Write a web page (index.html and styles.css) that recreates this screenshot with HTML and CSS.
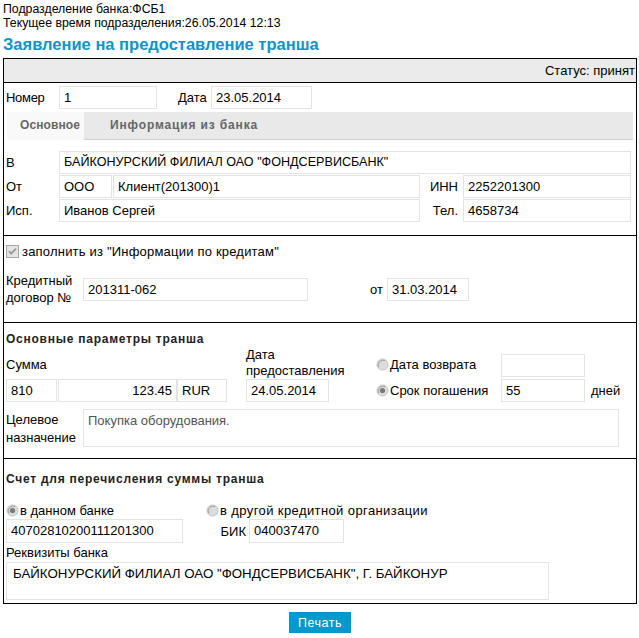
FILE: index.html
```html
<!DOCTYPE html>
<html lang="ru">
<head>
<meta charset="utf-8">
<title>Заявление на предоставление транша</title>
<link rel="stylesheet" href="styles.css">
</head>
<body>
<div class="info">Подразделение банка:ФСБ1</div>
<div class="info">Текущее время подразделения:26.05.2014 12:13</div>
<h1 class="title">Заявление на предоставление транша</h1>

<div class="frame">
  <div class="status">Статус: принят</div>

  <div class="num-row">
    <span class="lbl w-nomer">Номер</span>
    <span class="inp w-num">1</span>
    <span class="lbl w-data">Дата</span>
    <span class="inp w-date">23.05.2014</span>
  </div>

  <div class="tabs">
    <span class="tab active">Основное</span>
    <span class="tab">Информация из банка</span>
  </div>

  <div class="section s-parties">
    <div class="prow">
      <span class="lbl w-plbl">В</span>
      <span class="inp caps-s w-bank">БАЙКОНУРСКИЙ ФИЛИАЛ ОАО "ФОНДСЕРВИСБАНК"</span>
    </div>
    <div class="prow">
      <span class="lbl w-plbl">От</span>
      <span class="inp w-opf">ООО</span>
      <span class="inp w-client">Клиент(201300)1</span>
      <span class="lbl w-rlbl">ИНН</span>
      <span class="inp w-inn">2252201300</span>
    </div>
    <div class="prow">
      <span class="lbl w-plbl">Исп.</span>
      <span class="inp w-isp">Иванов Сергей</span>
      <span class="lbl w-rlbl">Тел.</span>
      <span class="inp w-inn">4658734</span>
    </div>
  </div>

  <div class="section s-credit">
    <div class="check-row">
      <svg class="chk" width="13" height="13" viewBox="0 0 13 13"><rect x="0.5" y="0.5" width="12" height="12" fill="#e4e4e4" stroke="#a8a8a8"/><path d="M3 6.2 L5.2 8.6 L10 3.6" fill="none" stroke="#9a9a9a" stroke-width="1.8"/></svg>
      <span class="chk-text">заполнить из "Информации по кредитам"</span>
    </div>
    <div class="credit-row">
      <span class="lbl w-klbl">Кредитный<br>договор №</span>
      <span class="inp w-dog">201311-062</span>
      <span class="lbl w-ot">от</span>
      <span class="inp w-otd">31.03.2014</span>
    </div>
  </div>

  <div class="section s-params">
    <div class="heading">Основные параметры транша</div>
    <div class="pgrid">
      <span class="lbl g-summa">Сумма</span>
      <span class="lbl g-dlbl">Дата<br>предоставления</span>
      <span class="radio g-r1"><svg width="13" height="13" viewBox="0 0 13 13"><circle cx="6.5" cy="6.5" r="5.5" fill="#dcdcdc" stroke="#c4c4c4"/><path d="M2.6 9.2 A5 5 0 0 1 9.2 2.6" fill="none" stroke="#a0a0a0" stroke-width="1"/></svg>Дата возврата</span>
      <span class="inp g-i1"></span>
      <span class="inp g-cur">810</span>
      <span class="inp g-amt">123.45</span>
      <span class="inp g-ccy">RUR</span>
      <span class="inp g-dp">24.05.2014</span>
      <span class="radio g-r2"><svg width="13" height="13" viewBox="0 0 13 13"><circle cx="6.5" cy="6.5" r="5.5" fill="#dcdcdc" stroke="#c4c4c4"/><path d="M2.6 9.2 A5 5 0 0 1 9.2 2.6" fill="none" stroke="#a0a0a0" stroke-width="1"/><circle cx="6.5" cy="6.5" r="2.6" fill="#7a7a7a"/></svg>Срок погашения</span>
      <span class="inp g-i2">55</span>
      <span class="lbl g-days">дней</span>
    </div>
    <div class="purpose-row">
      <span class="lbl w-klbl">Целевое<br>назначение</span>
      <span class="inp area w-purpose">Покупка оборудования.</span>
    </div>
  </div>

  <div class="section s-account">
    <div class="heading">Счет для перечисления суммы транша</div>
    <div class="acc-radios">
      <span class="radio w-r-this"><svg width="13" height="13" viewBox="0 0 13 13"><circle cx="6.5" cy="6.5" r="5.5" fill="#dcdcdc" stroke="#c4c4c4"/><path d="M2.6 9.2 A5 5 0 0 1 9.2 2.6" fill="none" stroke="#a0a0a0" stroke-width="1"/><circle cx="6.5" cy="6.5" r="2.6" fill="#7a7a7a"/></svg>в данном банке</span>
      <span class="radio wide"><svg width="13" height="13" viewBox="0 0 13 13"><circle cx="6.5" cy="6.5" r="5.5" fill="#dcdcdc" stroke="#c4c4c4"/><path d="M2.6 9.2 A5 5 0 0 1 9.2 2.6" fill="none" stroke="#a0a0a0" stroke-width="1"/></svg>в другой кредитной организации</span>
    </div>
    <div class="acc-row">
      <span class="inp w-acc">40702810200111201300</span>
      <span class="lbl w-bik">БИК</span>
      <span class="inp w-bikv">040037470</span>
    </div>
    <div class="lbl rekv">Реквизиты банка</div>
    <span class="inp area caps w-rekv">БАЙКОНУРСКИЙ ФИЛИАЛ ОАО "ФОНДСЕРВИСБАНК", Г. БАЙКОНУР</span>
  </div>
</div>

<div class="actions"><button class="btn" type="button">Печать</button></div>
</body>
</html>
```

FILE: styles.css
```css
* { box-sizing: border-box; }

body {
  margin: 0;
  padding: 2px 0 0 3px;
  font-family: "Liberation Sans", Arial, sans-serif;
  font-size: 12px;
  color: #000;
  background: #fff;
}

.info {
  line-height: 14px;
  font-size: 12.3px;
}

.title {
  margin: 6px 0 5px;
  font-size: 16.5px;
  line-height: 17px;
  font-weight: bold;
  color: #0a96cb;
}

.frame {
  width: 634px;
  border: 1px solid #000;
  font-size: 13px;
}

.status {
  height: 24px;
  line-height: 23px;
  background: #ebebeb;
  border-bottom: 1px solid #000;
  text-align: right;
  padding-right: 1px;
}

.lbl {
  display: block;
  line-height: 15px;
}

.inp {
  display: block;
  height: 23px;
  line-height: 21px;
  border: 1px solid #e3e3e3;
  background: #fff;
  padding: 0 4px;
  white-space: nowrap;
  overflow: hidden;
}

.caps { font-size: 13.3px; }
.caps-s { font-size: 12.6px; }
.wide { letter-spacing: 0.4px; }
.chk-text { letter-spacing: 0.2px; }

.area {
  line-height: 15px;
  padding-top: 3px;
  white-space: normal;
}

/* number row */
.num-row {
  display: flex;
  align-items: center;
  padding: 3px 0 0 2px;
}
.w-nomer { width: 53px; letter-spacing: -0.3px; }
.w-num { width: 98px; }
.w-data { width: 33px; margin-left: 21px; }
.w-date { width: 101px; }

/* tabs */
.tabs {
  display: flex;
  margin: 3px 3px 0 3px;
  height: 28px;
  background: #e9e9e9;
  font-size: 12px;
}
.tab {
  display: block;
  line-height: 26px;
  font-weight: bold;
  color: #666;
  border-bottom: 1px solid #cfcfcf;
  flex: 0 0 auto;
}
.tab.active {
  background: #f9f9f9;
  border-bottom: 0;
  width: 77px;
  padding-left: 13px;
  letter-spacing: 0.1px;
}
.tab:last-child {
  flex: 1 1 auto;
  padding-left: 26px;
  letter-spacing: 0.85px;
}

/* sections */
.section {
  border-bottom: 1px solid #000;
  padding-left: 2px;
}
.section:last-child { border-bottom: 0; }

.s-parties { padding-top: 10px; padding-bottom: 13px; }
.prow {
  display: flex;
  align-items: center;
  height: 24px;
}
.w-plbl { width: 53px; }
.w-bank { width: 572px; }
.w-opf { width: 53px; }
.w-client { width: 307px; margin-left: 1px; }
.w-rlbl { width: 43px; text-align: right; padding-right: 5px; }
.w-inn { width: 168px; }
.w-isp { width: 361px; }

.s-credit { padding-top: 8px; padding-bottom: 16px; }
.check-row {
  display: flex;
  align-items: center;
  gap: 3px;
  height: 14px;
}
.chk { display: block; }
.credit-row {
  display: flex;
  align-items: center;
  margin-top: 14px;
}
.w-klbl { width: 77px; line-height: 17px; }
.w-dog { width: 225px; }
.w-ot { width: 79px; text-align: right; padding-right: 4px; }
.w-otd { width: 82px; }

.heading {
  font-weight: bold;
  font-size: 12px;
  color: #222;
  letter-spacing: 0.75px;
  line-height: 16px;
}

.s-params { padding-top: 8px; padding-bottom: 11px; }
.pgrid {
  display: grid;
  grid-template-columns: 52px 119px 50px 19px 83px 47px 125px 84px 6px auto;
  grid-template-rows: 30px 23px;
  margin-top: 2px;
}
.g-summa { grid-column: 1 / 4; grid-row: 1; align-self: center; }
.g-dlbl { grid-column: 5 / 8; grid-row: 1; line-height: 16px; align-self: start; margin-top: -2px; }
.g-r1 { grid-column: 7; grid-row: 1; align-self: center; }
.g-i1 { grid-column: 8; grid-row: 1; align-self: end; margin-bottom: 2px; }
.g-cur { grid-column: 1; grid-row: 2; width: 51px; }
.g-amt { grid-column: 2; grid-row: 2; text-align: right; }
.g-ccy { grid-column: 3; grid-row: 2; }
.g-dp { grid-column: 5; grid-row: 2; }
.g-r2 { grid-column: 7; grid-row: 2; align-self: center; }
.g-i2 { grid-column: 8; grid-row: 2; }
.g-days { grid-column: 10; grid-row: 2; align-self: center; }

.radio {
  display: flex;
  align-items: center;
  line-height: 15px;
}
.radio svg { display: block; margin-right: 1px; }

.purpose-row {
  display: flex;
  margin-top: 7px;
}
.purpose-row .w-klbl { padding-top: 2px; line-height: 18px; }
.w-purpose { width: 536px; height: 38px; color: #555; }

.s-account { padding-top: 12px; padding-bottom: 3px; }
.acc-radios {
  display: flex;
  margin-top: 16px;
}
.w-r-this { width: 200px; }
.acc-row {
  display: flex;
  align-items: center;
  margin-top: 1px;
}
.w-acc { width: 177px; height: 24px; }
.w-bik { width: 66px; text-align: right; padding-right: 3px; }
.w-bikv { width: 95px; height: 24px; }
.rekv { margin-top: 2px; }
.w-rekv { width: 543px; height: 38px; margin-top: 2px; padding-left: 6px; }

.actions {
  width: 634px;
  text-align: center;
  padding-top: 8px;
}
.btn {
  font-family: "Liberation Sans", Arial, sans-serif;
  font-size: 12.5px;
  color: #fff;
  background: #0099cc;
  border: 0;
  height: 21px;
  width: 62px;
  padding: 0;
  letter-spacing: 0.5px;
}
```
